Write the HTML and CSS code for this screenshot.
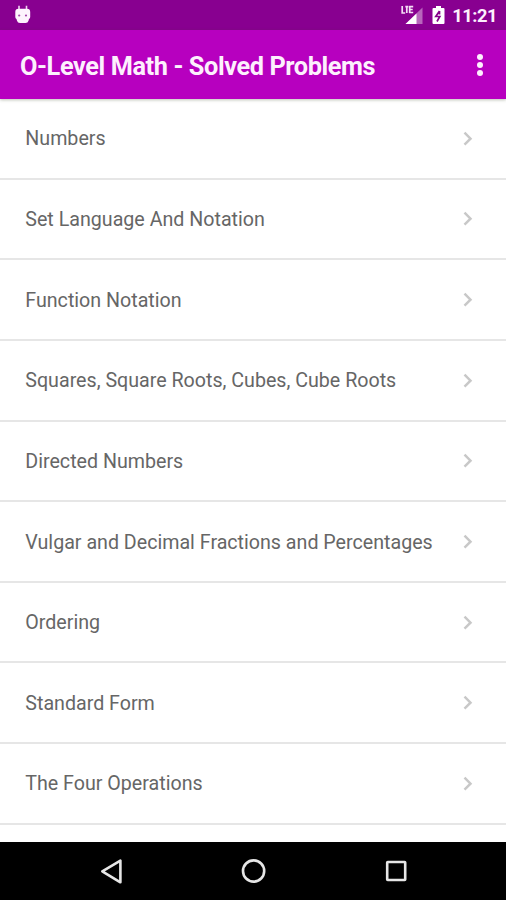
FILE: index.html
```html
<!DOCTYPE html>
<html lang="en">
  <head>
    <meta charset="UTF-8" />
    <meta name="viewport" content="width=device-width, initial-scale=1.0" />
    <title>O-Level Math - Solved Problems</title>
    <link rel="stylesheet" href="styles.css" />
  </head>
  <body>
    <div class="wrap">
      <div class="status">
        <svg class="debug" width="18" height="20" viewBox="0 0 18 20">
          <path d="M5 .8v5M12.500 .8v5" stroke="#f0d2f2" stroke-width="1.600" />
          <path d="M1.300 7Q1.300 3.800 4.500 3.800h8.500q3.200 0 3.200 3.200v5q0 1.500-1.200 2l-.5 1.800q-.6 2.200-3 2.200H6q-2.400 0-3-2.200L2.500 14q-1.200-.5-1.200-2z" fill="#fdf3fd" />
          <circle cx="5.200" cy="10.500" r="1.100" fill="#a546ab" />
          <circle cx="12" cy="10.500" r="1.100" fill="#a546ab" />
        </svg>
        <div class="status_right">
          <svg width="22" height="20" viewBox="0 0 22 20">
            <path d="M21.500 2.500v16.500H4.500z" fill="#b866bc" />
            <path d="M15.500 8.500V19H4.500z" fill="#fff" />
            <path d="M1.200 1v7h3M5.800 1v7M4.300 1.700h3M8.700 1v7M8.200 1.700h4M8.200 4.500h3.500M8.200 7.500h4" fill="none" stroke="#f3dcf4" stroke-width="1.700" />
          </svg>
          <svg class="battery" width="13" height="20" viewBox="0 0 13 20">
            <path d="M4 1h5v2h2.500q1 0 1 1v14q0 1-1 1h-10q-1 0-1-1V4q0-1 1-1H4z" fill="#fff" />
            <path d="M7.500 6 3.800 11.500h4L5 16.500M7.500 6v3.500" fill="none" stroke="#850089" stroke-width="1.700" />
          </svg>
          <span class="time">11:21</span>
        </div>
      </div>
      <div class="header">
        <h1 class="title">O-Level Math - Solved Problems</h1>
        <div class="menu"><i></i><i></i><i></i></div>
      </div>
      <ul id="list"></ul>
      <div class="nav">
        <svg width="506" height="58" viewBox="0 0 506 58">
          <g fill="none" stroke="#e6e6e6" stroke-width="2.600">
            <path d="M120.400 18.700v21.600L102.300 29.300z" stroke-linejoin="round" />
            <circle cx="253.600" cy="29" r="10.600" />
            <rect x="387.200" y="20" width="18" height="18" rx=".5" />
          </g>
        </svg>
      </div>
    </div>

    <script>
      const $list = document.querySelector("#list");
      const topics = [
        "Numbers",
        "Set Language And Notation",
        "Function Notation",
        "Squares, Square Roots, Cubes, Cube Roots",
        "Directed Numbers",
        "Vulgar and Decimal Fractions and Percentages",
        "Ordering",
        "Standard Form",
        "The Four Operations",
      ];
      topics.forEach((topic) => {
        const $li = document.createElement("li");
        $li.innerHTML = `<span>${topic}</span>
          <svg width="10" height="16" viewBox="0 0 10 16">
            <path d="M1.500 1.700l6 6-6 6" fill="none" stroke="#c8c8c8" stroke-width="2.500" />
          </svg>`;
        $list.appendChild($li);
      });
    </script>
  </body>
</html>
```
FILE: styles.css
```css
* {
  box-sizing: border-box;
}
body {
  margin: 0;
  font-family: Roboto, "Liberation Sans", sans-serif;
  background-color: white;
}
svg {
  display: block;
}
.wrap {
  display: flex;
  flex-direction: column;
  height: 900px;
  overflow: hidden;
}
.status {
  display: flex;
  flex: none;
  justify-content: space-between;
  align-items: center;
  height: 30px;
  padding: 0 9px 0 14px;
  background-color: #880090;
}
.status_right {
  display: flex;
  align-items: center;
}
.battery {
  margin-left: 9px;
}
.time {
  margin-left: 7px;
  padding-top: 2px;
  font-size: 18.3px;
  font-weight: 700;
  letter-spacing: -0.45px;
  line-height: 28px;
  color: #fdf0fd;
}
.header {
  display: flex;
  flex: none;
  justify-content: space-between;
  align-items: center;
  height: 69px;
  padding: 0 23px 0 20px;
  background-color: #b700bf;
  box-shadow: 0 1px 3px rgba(60, 80, 40, 0.35);
  z-index: 1;
}
.title {
  margin: 0;
  padding-top: 3px;
  font-size: 25.3px;
  font-weight: 700;
  letter-spacing: -0.4px;
  color: #fdf0fd;
}
.menu {
  display: flex;
  flex-direction: column;
  gap: 2px;
}
.menu i {
  width: 6px;
  height: 6px;
  border-radius: 50%;
  background-color: #fdf0fd;
}
#list {
  flex: 1;
  min-height: 0;
  margin: 0;
  padding: 0;
  list-style: none;
}
#list li {
  display: flex;
  justify-content: space-between;
  align-items: center;
  height: 80.65px;
  padding: 1px 33.5px 0 25.3px;
  border-bottom: 2px solid #e6e6e6;
  font-size: 19.65px;
  color: #666;
}
.nav {
  flex: none;
  height: 58px;
  background-color: black;
}
```
